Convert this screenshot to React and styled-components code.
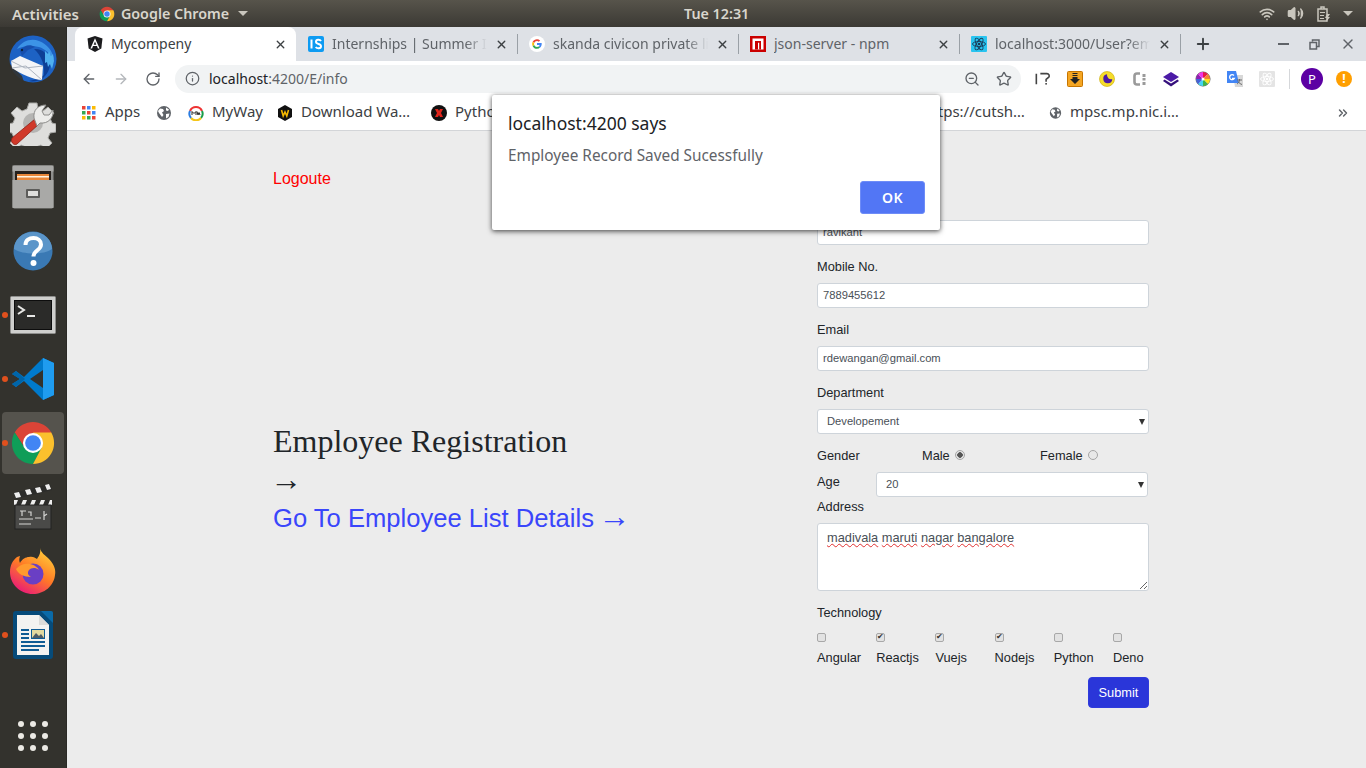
import styled, { createGlobalStyle } from 'styled-components';
import { ArrowLeft, ArrowRight, RotateCw, Info, ZoomOut, Star, X, Plus, Wifi, Volume2, ChevronsRight } from 'lucide-react';

const GlobalStyle = createGlobalStyle`
  html, body {
    margin: 0;
    height: 100%;
    overflow: hidden;
    background: #33322d;
  }
  * {
    box-sizing: border-box;
  }
`;

const Screen = styled.div`
  display: flex;
  flex-direction: column;
  width: 1366px;
  height: 768px;
  overflow: hidden;
  font-family: 'Noto Sans', sans-serif;
`;

const TopBar = styled.header`
  display: grid;
  grid-template-columns: 684px 1fr auto;
  align-items: center;
  height: 27px;
  flex-shrink: 0;
  background: linear-gradient(#57544b, #3b3934);
  color: #d9d6cd;
  font-size: 14.300px;
  font-weight: 600;
`;
const TopLeft = styled.div`
  display: flex;
  align-items: center;
  padding-left: 12px;
`;
const Activities = styled.span`
  font-size: 15px;
`;
const AppName = styled.span`
  display: flex;
  align-items: center;
  gap: 6px;
  margin-left: 20px;
`;
const Caret = styled.span`
  width: 0;
  height: 0;
  border-left: 5px solid transparent;
  border-right: 5px solid transparent;
  border-top: 5px solid #c9c6bd;
  margin-left: ${(p) => p.$gap || 0}px;
`;
const TopRight = styled.div`
  display: flex;
  align-items: center;
  gap: 12px;
  padding-right: 13px;
  color: #c9c6bd;
`;

const Desktop = styled.div`
  display: flex;
  flex: 1;
  min-height: 0;
`;

const Dock = styled.nav`
  display: flex;
  flex-direction: column;
  width: 67px;
  flex-shrink: 0;
  background: #33322d;
  border-right: 1px solid #2b2a26;
`;
const DockItem = styled.div`
  position: relative;
  display: flex;
  align-items: center;
  justify-content: center;
  width: 66px;
  height: 64px;
  flex-shrink: 0;
  margin-top: ${(p) => (p.$bottom ? 'auto' : '0')};

  ${(p) =>
    p.$running &&
    `
    &:before {
      content: '';
      position: absolute;
      left: 2px;
      top: 29px;
      width: 6px;
      height: 6px;
      border-radius: 50%;
      background: #e0501d;
    }
  `}
`;
const DockTile = styled.div`
  display: flex;
  align-items: center;
  justify-content: center;
  width: 62px;
  height: 62px;
  border-radius: 4px;
  background: #55534d;
`;
const DotGrid = styled.div`
  display: grid;
  grid-template-columns: repeat(3, 6px);
  gap: 6px;

  & span {
    width: 6px;
    height: 6px;
    border-radius: 50%;
    background: #ebe9e4;
  }
`;

const Browser = styled.main`
  display: flex;
  flex-direction: column;
  position: relative;
  flex: 1;
  min-width: 0;
  background: #ececec;
`;

const TabStrip = styled.div`
  display: flex;
  align-items: flex-end;
  height: 34px;
  flex-shrink: 0;
  padding-left: 8px;
  background: #dee1e6;
`;
const Tab = styled.div`
  display: flex;
  align-items: center;
  gap: 8px;
  width: 221px;
  height: 34px;
  padding: 0 9px 0 12px;
  flex-shrink: 0;
  background: ${(p) => (p.$active ? '#fff' : 'transparent')};
  border-radius: ${(p) => (p.$active ? '8px 8px 0 0' : '0')};
  color: ${(p) => (p.$active ? '#3c4043' : '#5f6368')};
  font-size: 14px;
  position: relative;

  ${(p) =>
    p.$divider &&
    `
    &:after {
      content: '';
      position: absolute;
      right: -1px;
      top: 7px;
      width: 1px;
      height: 20px;
      background: #9aa0a6;
    }
  `}
`;
const TabTitle = styled.span`
  flex: 1;
  min-width: 0;
  overflow: hidden;
  white-space: nowrap;
  padding-bottom: 2px;
  ${(p) =>
    p.$fade &&
    `
    -webkit-mask-image: linear-gradient(90deg, #000 86%, transparent 100%);
    mask-image: linear-gradient(90deg, #000 86%, transparent 100%);
  `}
`;
const NewTab = styled.div`
  display: flex;
  align-items: center;
  justify-content: center;
  width: 44px;
  height: 34px;
  margin-left: 1px;
  color: #3c4043;
`;
const WindowControls = styled.div`
  display: flex;
  align-items: center;
  margin-left: auto;
  height: 34px;
  padding-right: 10px;
  gap: 15px;
  color: #5f6368;
`;
const WindowButton = styled.div`
  display: flex;
  align-items: center;
  justify-content: center;
  width: 16px;
  height: 16px;
  margin-left: ${(p) => p.$gap || 0}px;
`;

const Toolbar = styled.div`
  display: flex;
  align-items: center;
  height: 35px;
  flex-shrink: 0;
  padding-left: 14px;
  background: #fff;
  color: #5f6368;
`;
const NavButton = styled.div`
  display: flex;
  align-items: center;
  justify-content: center;
  width: 16px;
  margin-right: ${(p) => (p.$last ? 14 : 16)}px;
  color: ${(p) => (p.$off ? '#b4b7bb' : '#5f6368')};
`;
const Omnibox = styled.div`
  display: flex;
  align-items: center;
  gap: 16px;
  width: 846px;
  height: 28px;
  padding: 0 9px 0 10px;
  flex-shrink: 0;
  border-radius: 14px;
  background: #f1f3f4;
`;
const Url = styled.span`
  flex: 1;
  margin-left: -7px;
  font-size: 14px;
  color: #5f6368;

  & b {
    font-weight: 400;
    color: #202124;
  }
`;
const Extensions = styled.div`
  display: flex;
  align-items: center;
  margin-left: 14px;
`;
const Extension = styled.div`
  display: flex;
  align-items: center;
  justify-content: center;
  width: 16px;
  height: 16px;
  margin-right: 16px;
`;
const ToolbarDivider = styled.div`
  width: 1px;
  height: 20px;
  background: #d5d7da;
  margin: 0 11px 0 -2px;
`;
const Avatar = styled.div`
  display: flex;
  align-items: center;
  justify-content: center;
  width: 22px;
  height: 22px;
  border-radius: 50%;
  background: #5c00a3;
  color: #fff;
  font-size: 13px;
`;
const Warning = styled.div`
  display: flex;
  align-items: center;
  justify-content: center;
  width: 16px;
  height: 16px;
  margin-left: 13px;
  border-radius: 50%;
  background: #ff9f00;
  color: #fff;
  font-size: 12px;
  font-weight: 700;
`;

const BookmarksBar = styled.div`
  display: flex;
  align-items: center;
  height: 35px;
  flex-shrink: 0;
  padding: 0 0 1px 15px;
  background: #fff;
  border-bottom: 1px solid #d3d5d8;
  color: #5f6368;
`;
const Bookmark = styled.div`
  display: flex;
  align-items: center;
  justify-content: ${(p) => (p.$end ? 'flex-end' : 'flex-start')};
  gap: ${(p) => p.$gap || 8}px;
  width: ${(p) => p.$w}px;
  padding-right: ${(p) => (p.$end ? 24 : 0)}px;
  flex-shrink: 0;
  font-size: 15px;
  color: #3c4043;
  white-space: nowrap;

  & span {
    padding-bottom: 3px;
  }
`;
const MoreBookmarks = styled.div`
  display: flex;
  margin-left: auto;
  margin-right: 16px;
  color: #5f6368;
`;

const Page = styled.section`
  display: grid;
  grid-template-columns: 544px 332px;
  flex: 1;
  min-height: 0;
  padding: 0 0 0 206px;
  font-family: 'Liberation Sans', Arial, sans-serif;
`;
const Intro = styled.div`
  display: flex;
  flex-direction: column;
  align-items: flex-start;
`;
const Logout = styled.a`
  margin-top: 39px;
  font-size: 16px;
  line-height: 18px;
  color: #ff0000;
`;
const IntroTitle = styled.h1`
  margin: 234px 0 0;
  font-family: 'Liberation Serif', 'Times New Roman', serif;
  font-size: 32px;
  font-weight: 400;
  line-height: 38px;
  color: #212529;
`;
const LongArrow = styled.div`
  margin: 0 0 0 -3px;
  font-family: 'Liberation Serif', 'Times New Roman', serif;
  font-size: 32px;
  line-height: 38px;
  color: #212529;
`;
const ListLink = styled.a`
  margin-top: 4px;
  font-size: 25.600px;
  line-height: 32px;
  color: #3a46fb;
`;
const LinkArrow = styled.span`
  margin-left: -3px;
  font-family: 'Liberation Serif', 'Times New Roman', serif;
  font-size: 32px;
  line-height: 0;
`;

const Form = styled.form`
  display: flex;
  flex-direction: column;
  padding-top: 64px;
  color: #212529;
  font-size: 12.800px;
`;
const Label = styled.label`
  display: block;
  line-height: 15px;
  padding-top: ${(p) => (p.$raised ? 0 : 1)}px;
  height: 15px;
  margin-bottom: ${(p) => (p.$gap === undefined ? 10 : p.$gap)}px;
`;
const Field = styled.div`
  margin-bottom: 13px;
`;
const inputBox = `
  display: block;
  width: 100%;
  height: 25px;
  background: #fff;
  border: 1px solid #ced4da;
  border-radius: 3px;
  color: #495057;
  font-family: 'Liberation Sans', Arial, sans-serif;
  font-size: 11.200px;
  outline: none;
`;
const TextInput = styled.input`
  ${inputBox}
  padding: 0 6px 2px 5px;
`;
const SelectWrap = styled.div`
  position: relative;
  width: 100%;

  &:after {
    content: '';
    position: absolute;
    right: 4px;
    top: 10px;
    border-left: 3px solid transparent;
    border-right: 3px solid transparent;
    border-top: 6px solid #333;
  }
`;
const Select = styled.select`
  ${inputBox}
  appearance: none;
  padding: 0 9px 1px;
`;
const GenderRow = styled.div`
  display: grid;
  grid-template-columns: 105px 118px 1fr;
  line-height: 15px;
  padding-top: 1px;
  height: 15px;
  margin-bottom: 10px;
`;
const GenderOption = styled.label`
  display: flex;
  align-items: center;
  gap: 5px;
`;
const Radio = styled.input.attrs({ type: 'radio' })`
  appearance: none;
  width: 10px;
  height: 10px;
  margin: 0 0 2px;
  border: 1px solid #a5a5a5;
  border-radius: 50%;
  background: ${(p) => (p.checked ? 'radial-gradient(circle, #555 0 2.5px, #e4e4e4 3px)' : '#e8e8e8')};
`;
const AgeRow = styled.div`
  display: grid;
  grid-template-columns: 59px 272px;
  margin-bottom: 2px;
`;
const AgeLabel = styled.label`
  line-height: 15px;
  margin-top: 2px;
`;
const AddressBox = styled.div`
  width: 100%;
  height: 68px;
  padding: 6px 9px;
  background: #fff;
  border: 1px solid #ced4da;
  border-radius: 3px;
  color: #495057;
  font-size: 12.800px;
  line-height: 15px;
  overflow: auto;
  resize: both;
  margin-bottom: 14px;
`;
const Misspelled = styled.span`
  text-decoration: underline wavy #e03030 1px;
  text-underline-offset: 1px;
`;
const TechGrid = styled.div`
  display: grid;
  grid-template-columns: repeat(6, 59.2px);
`;
const TechOption = styled.label`
  display: flex;
  flex-direction: column;
  align-items: flex-start;
  gap: 8px;
  line-height: 15px;
  white-space: nowrap;
`;
const CheckBox = styled.input.attrs({ type: 'checkbox' })`
  appearance: none;
  position: relative;
  width: 9px;
  height: 9px;
  margin: 0;
  border: 1px solid #a8a8a8;
  border-radius: 2px;
  background: #e2e2e2;

  &:checked:after {
    content: '✔';
    position: absolute;
    left: 0;
    top: -3px;
    font-size: 8px;
    line-height: 12px;
    color: #333;
  }
`;
const Actions = styled.div`
  display: flex;
  justify-content: flex-end;
  margin-top: 12px;
`;
const SubmitButton = styled.button`
  width: 61px;
  height: 31px;
  padding: 0;
  border: 1px solid #2f3bdc;
  border-radius: 4px;
  background: #2a36d9;
  color: #fff;
  font-family: 'Liberation Sans', Arial, sans-serif;
  font-size: 12.800px;
`;

const Dialog = styled.div`
  position: absolute;
  left: 425px;
  top: 68px;
  width: 448px;
  height: 135px;
  padding: 16px 15px 16px 16px;
  background: #fff;
  border-radius: 2px;
  box-shadow: 0 1px 4px rgba(0, 0, 0, 0.55), 0 2px 6px rgba(0, 0, 0, 0.25);
`;
const DialogTitle = styled.div`
  font-size: 17.500px;
  line-height: 24px;
  color: #202124;
`;
const DialogMessage = styled.div`
  margin-top: 8px;
  font-size: 15.350px;
  line-height: 24px;
  color: #5f6368;
`;
const DialogActions = styled.div`
  display: flex;
  justify-content: flex-end;
  margin-top: 14px;
`;
const OkButton = styled.button`
  width: 65px;
  height: 33px;
  border: 1px solid #6e8cf7;
  border-radius: 3px;
  background: #5276f5;
  color: #fff;
  font-family: 'Noto Sans', sans-serif;
  font-size: 14px;
  font-weight: 600;
  letter-spacing: 0.5px;
`;

const ChromeLogo = ({ size }) => (
  <svg width={size} height={size} viewBox="0 0 48 48">
    <path fill="#db4437" d="M43.05 13A22 22 0 0 0 4.95 13L15.3 29 24 14h19.05z" />
    <path fill="#0f9d58" d="M4.95 13A22 22 0 0 0 24 46l9-17H15.3z" />
    <path fill="#fbc02d" d="M24 46A22 22 0 0 0 43.05 13H24l9 16z" />
    <circle cx="24" cy="24" r="10.5" fill="#fff" />
    <circle cx="24" cy="24" r="8.2" fill="#4285f4" />
  </svg>
);

const ThunderbirdIcon = () => (
  <svg width="48" height="48" viewBox="0 0 48 48">
    <circle cx="24" cy="24" r="23.500" fill="#1d62c4" />
    <path fill="#3c93e6" d="M8 14C13 6 22 3 30 6c8 3 14 10 15 19-4-7-9-11-15-13-8-2-16-1-22 2z" />
    <path fill="#0d3f96" d="M25 14c8-1 14 5 16 12 1 7-3 14-8 18-4 2-9 3-13 2 6-1 12-3 15-6 1-9-2-19-10-26z" />
    <path fill="#4fb0f0" d="M36 16l3 3 1-3 2 5 2-2 1 7-2 8-2-5-2 3-1-5-2 1z" />
    <path fill="#164fae" d="M11 16C15 10 21 9 26 12l-7 3-6 6z" />
    <path fill="#33322d" d="M0 28l3 10 6 6 6 3-2-6-6-6z" opacity="0.9" />
    <path fill="#f4f5f7" d="M2 26l9-5 23 10-1 14c-8 0-21-6-30-12z" />
    <path fill="none" stroke="#aeb5c0" strokeWidth="1" d="M3 33l14-2 16 14M2 26l14 7 18-2" />
    <circle cx="13" cy="15" r="1.200" fill="#10243f" />
  </svg>
);

const GearIcon = () => (
  <svg width="46" height="46" viewBox="0 0 46 46">
    <path
      fill="#dededc"
      stroke="#a9a9a6"
      strokeWidth="1"
      d="M19 3h8l1 6 5 2 5-4 6 6-4 5 2 5 4 1v8l-6 1-2 5 4 5-6 6-5-4-5 2-1 4h-8l-1-4-5-2-5 4-6-6 4-5-2-5-5-1v-8l6-1 2-5-4-5 6-6 5 4 5-2z"
    />
    <circle cx="23" cy="23" r="10" fill="#b5b5b3" />
    <path fill="#d0392a" stroke="#8e1f16" strokeWidth="0.8" d="M2 38l23-19 4 5L7 44c-3 2-7-2-5-6z" />
    <path fill="#ececea" stroke="#8c8c8a" strokeWidth="1" d="M24 18c-1-8 4-13 12-13l-4 6 2 4 5 0 4-5c1 8-5 14-13 13l-3 3z" />
  </svg>
);

const CabinetIcon = () => (
  <svg width="42" height="44" viewBox="0 0 42 44">
    <rect x="0.5" y="0.5" width="41" height="43" rx="2" fill="#8f8f8d" />
    <rect x="0.5" y="0.5" width="41" height="6" fill="#a9a9a7" />
    <rect x="3" y="6" width="36" height="10" fill="#26211d" />
    <rect x="5" y="9" width="32" height="6" fill="#e8873a" />
    <rect x="5" y="11" width="32" height="1.5" fill="#fff3e0" />
    <rect x="0.5" y="15" width="41" height="28" fill="#a9a9a7" />
    <rect x="14" y="24" width="14" height="9" rx="1" fill="#5c5c5a" />
    <rect x="16" y="26" width="10" height="5" fill="#dfdfdd" />
  </svg>
);

const HelpIcon = () => (
  <svg width="40" height="40" viewBox="0 0 40 40">
    <circle cx="20" cy="20" r="19.5" fill="#3a79b4" />
    <path fill="#5b95c9" d="M1 18a19 17 0 0 1 38 0c-8 6-29 6-38 0z" />
    <path fill="none" stroke="#fff" strokeWidth="4" d="M12.5 14c0-5 4-7 8-7s7.5 2.5 7.5 6.5c0 6-7.5 5.5-7.500 12" />
    <circle cx="20.5" cy="32" r="3" fill="#fff" />
  </svg>
);

const TerminalIcon = () => (
  <svg width="46" height="38" viewBox="0 0 46 38">
    <rect x="0.5" y="0.5" width="45" height="37" rx="1" fill="#cfcfcd" stroke="#8f8f8d" />
    <rect x="4.500" y="4.500" width="37" height="29" fill="#2b2b29" stroke="#0d0d0d" />
    <path fill="none" stroke="#e8e8e6" strokeWidth="2" d="M8 10l6 4-6 4" />
    <rect x="17" y="19" width="8" height="2" fill="#e8e8e6" />
  </svg>
);

const VsCodeIcon = () => (
  <svg width="42" height="42" viewBox="0 0 42 42">
    <path fill="#007acc" d="M31 0L12 19 4 13 0 16l8 5-8 5 4 3 8-6 19 19 11-5V5z" />
    <path fill="#0065a9" d="M4 13L0 16l8 5-8 5 4 3 9-8z" />
    <path fill="#1f9cf0" d="M31 0l11 5v32l-11 5z" />
    <path fill="#33322d" d="M31 12L18 21l13 9z" />
  </svg>
);

const ClapperIcon = () => (
  <svg width="40" height="46" viewBox="0 0 40 46">
    <path fill="#2c2c2a" d="M1 9L37 0l2 6L3 15z" />
    <path fill="#eee" d="M1 9l5-1 2 5-5 1zM12 6l5-1 2 5-5 1zM22 4l5-1 2 5-5 1zM32 1l4-1 2 5-4 1z" />
    <rect x="1" y="16" width="38" height="5" fill="#eee" />
    <path fill="#2c2c2a" d="M5 16h5l-2 5H3zM14 16h5l-2 5h-5zM23 16h5l-2 5h-5zM32 16h5l-2 5h-5z" />
    <rect x="2" y="21" width="36" height="24" fill="#4a4a48" stroke="#222" />
    <path fill="none" stroke="#d5d5d3" strokeWidth="1.200" d="M7 27h6M9 27v5M15 28h3v4M22 34h6M31 27v9M31 32l3-2M6 35h14M6 40h12" />
  </svg>
);

const FirefoxIcon = () => (
  <svg width="46" height="46" viewBox="0 0 46 46">
    <defs>
      <linearGradient id="foxBody" x1="0.8" y1="0" x2="0.2" y2="1">
        <stop offset="0" stopColor="#ffd23a" />
        <stop offset="0.5" stopColor="#ff7a26" />
        <stop offset="1" stopColor="#e8127f" />
      </linearGradient>
    </defs>
    <path
      fill="url(#foxBody)"
      d="M30 0c1 5 5 7 9 11 5 5 7 11 6 16-1 11-11 19-22 19C10 46 0 36 0 24 0 17 3 12 7 9l3-1c-1 3-1 5 0 7 2-4 6-6 9-6 4-1 6 1 8 2 2-3 4-6 3-11z"
    />
    <circle cx="23" cy="26" r="10.5" fill="#6a3fc4" />
    <path fill="#ff9a2e" d="M6 21c4-5 10-6 14-5 5 1 8 4 9 6-4-3-8-2-10 0-2 3-1 5 2 7-7 0-13-3-15-8z" />
  </svg>
);

const WriterIcon = () => (
  <svg width="40" height="48" viewBox="0 0 40 48">
    <rect x="0" y="0" width="40" height="48" rx="3" fill="#064b7a" />
    <path fill="#0a6aa8" d="M28 0h10a2 2 0 0 1 2 2v10z" />
    <path fill="#f3f3f1" d="M4 4h22l10 10v30H4z" />
    <path fill="#dcdcda" d="M26 4v10h10z" />
    <path fill="#0f5c94" d="M8 18h8v2H8zM8 22h8v2H8zM8 26h8v2H8zM8 30h24v2H8zM8 34h24v2H8zM8 38h18v2H8z" />
    <rect x="18" y="18" width="14" height="10" fill="#0f5c94" />
    <rect x="19" y="19" width="12" height="8" fill="#e3d9a0" />
    <path fill="#4d5a66" d="M19 27l4-5 3 3 2-2 3 4z" />
  </svg>
);

const AngularFav = () => (
  <svg width="16" height="16" viewBox="0 0 16 16">
    <path fill="#1b1b1d" d="M8 0l7.5 2.6-1.2 9.9L8 16l-6.3-3.5L.5 2.6z" />
    <path fill="#fff" d="M8 2.2L3.4 12.4h1.7l.9-2.3h4l.9 2.3h1.7zM6.7 8.7L8 5.6l1.3 3.1z" />
  </svg>
);
const InternshalaFav = () => (
  <svg width="16" height="16" viewBox="0 0 16 16">
    <rect width="16" height="16" rx="2" fill="#0d9bf2" />
    <path fill="none" stroke="#fff" strokeWidth="2" d="M3.5 3.5v9M13 5c-1-1.6-5-1.8-5 .8 0 2.9 5 1.5 5 4.4 0 2.6-4 2.5-5.3.8" />
  </svg>
);
const GoogleFav = () => (
  <svg width="16" height="16" viewBox="0 0 16 16">
    <circle cx="8" cy="8" r="8" fill="#fff" />
    <path fill="#ea4335" d="M8 3.2c1.2 0 2.3.4 3.1 1.2l-1.3 1.3C9.300 5.200 8.700 5 8 5 6.700 5 5.600 5.800 5.200 7L3.700 5.800C4.500 4.200 6.100 3.200 8 3.200z" />
    <path fill="#fbbc05" d="M3.700 5.800L5.200 7c-.2.600-.2 1.400 0 2l-1.500 1.200c-.7-1.400-.7-3 0-4.400z" />
    <path fill="#34a853" d="M5.200 9c.4 1.200 1.500 2 2.800 2 .7 0 1.200-.2 1.700-.5l1.400 1.100c-.8.800-1.900 1.200-3.100 1.200-1.900 0-3.500-1-4.300-2.600z" />
    <path fill="#4285f4" d="M12.700 8c0-.3 0-.6-.1-.9H8v1.800h2.600c-.1.600-.5 1.200-.9 1.600l1.400 1.100c.9-.8 1.600-2.100 1.600-3.600z" />
  </svg>
);
const NpmFav = () => (
  <svg width="16" height="16" viewBox="0 0 16 16">
    <rect width="16" height="16" fill="#cb0000" />
    <rect x="2.500" y="2.500" width="11" height="11" fill="#fff" />
    <path fill="#cb0000" d="M5 5h6v8.500H9.200V6.800H8V13.500H5z" />
  </svg>
);
const Atom = ({ size, color, bg }) => (
  <svg width={size} height={size} viewBox="0 0 16 16">
    <rect width="16" height="16" rx="1" fill={bg} />
    <g fill="none" stroke={color} strokeWidth="0.9">
      <ellipse cx="8" cy="8" rx="6.500" ry="2.500" />
      <ellipse cx="8" cy="8" rx="6.500" ry="2.500" transform="rotate(60 8 8)" />
      <ellipse cx="8" cy="8" rx="6.500" ry="2.500" transform="rotate(120 8 8)" />
    </g>
    <circle cx="8" cy="8" r="1.300" fill={color} />
  </svg>
);

const GlobeFav = () => (
  <svg width="16" height="16" viewBox="0 0 16 16">
    <circle cx="8" cy="8" r="7" fill="#5f6368" />
    <path fill="#fff" d="M4 3.500l3 .5 1 2-2 1.500L7.500 10 6 12 3 8 2 6zM10 2.500l3 2-1 1.500-2-.5zM10 9l3.500-.5-1 3.500-2.500 1.500z" />
  </svg>
);
const AppsIcon = () => {
  const colors = ['#ea4335', '#4285f4', '#fbbc05', '#34a853', '#ea4335', '#4285f4', '#fbbc05', '#34a853', '#ea4335'];
  return (
    <svg width="14" height="14" viewBox="0 0 14 14">
      {colors.map((c, i) => (
        <rect key={i} x={(i % 3) * 5} y={Math.floor(i / 3) * 5} width="3.500" height="3.500" fill={c} />
      ))}
    </svg>
  );
};
const MyWayFav = () => (
  <svg width="16" height="16" viewBox="0 0 16 16">
    <path fill="none" stroke="#e33" strokeWidth="2" d="M2 6a6.500 6.500 0 0 1 12 0" />
    <path fill="none" stroke="#1a9e4b" strokeWidth="2" d="M14 6a6.500 6.500 0 0 1 -1 7" />
    <path fill="none" stroke="#f5c518" strokeWidth="2" d="M13 13a6.500 6.500 0 0 1 -10 0" />
    <path fill="none" stroke="#2a7de1" strokeWidth="2" d="M3 13a6.500 6.500 0 0 1 -1 -7" />
    <path fill="none" stroke="#222" strokeWidth="1" d="M4 10V6.500l2 2 2-2V10M9 6.500l1 3.500 1-2.500 1 2.500" />
  </svg>
);
const WFav = () => (
  <svg width="16" height="16" viewBox="0 0 16 16">
    <path fill="#111" d="M8 0l7 4v8l-7 4-7-4V4z" />
    <path fill="none" stroke="#f5b800" strokeWidth="1.600" d="M4.500 5l1.700 6L8 7l1.800 4 1.700-6" />
  </svg>
);
const PythonFav = () => (
  <svg width="16" height="16" viewBox="0 0 16 16">
    <circle cx="8" cy="8" r="8" fill="#111" />
    <path fill="#e0241b" d="M4 4h3l1 2 1-2h3l-2 4 2 4H9L8 10l-1 2H4l2-4z" />
  </svg>
);

const PageIcons = {
  ip: (
    <svg width="18" height="16" viewBox="0 0 18 16">
      <path fill="none" stroke="#444" strokeWidth="1.800" d="M1.500 2v12M6 2h7.500a2.500 2.500 0 0 1 2 4l-3 2.500V11" />
      <rect x="11.600" y="12.500" width="1.800" height="1.800" fill="#444" />
    </svg>
  ),
  download: (
    <svg width="16" height="16" viewBox="0 0 16 16">
      <rect x="0.500" y="0.500" width="15" height="15" rx="1" fill="#f5a623" stroke="#c67500" />
      <path fill="#222" d="M5.500 2h5v1h-5zM5.500 4h5v1h-5zM5.500 6h5v2h2.500L8 13 3 8h2.500z" />
    </svg>
  ),
  moon: (
    <svg width="16" height="16" viewBox="0 0 16 16">
      <circle cx="8" cy="8" r="7.500" fill="#f5dc2a" stroke="#c7a800" strokeWidth="0.600" />
      <path fill="#4b1aa6" d="M10 3.800a4.500 4.500 0 1 0 2.800 6.400A4 4 0 0 1 10 3.800z" transform="rotate(-25 8 8)" />
    </svg>
  ),
  coin: (
    <svg width="16" height="16" viewBox="0 0 16 16">
      <path fill="none" stroke="#9a9a9a" strokeWidth="2.600" d="M9 2.500H6a2.500 2.500 0 0 0-2.500 2.500v6A2.500 2.500 0 0 0 6 13.500h3" />
      <path fill="#9a9a9a" d="M11.500 3h3v3h-3zM11.500 7h3v2.500h-3zM11.500 11h3v3h-3z" />
    </svg>
  ),
  layers: (
    <svg width="16" height="16" viewBox="0 0 16 16">
      <path fill="#4b1aa6" d="M8 1l8 5-8 5-8-5z" />
      <path fill="#35107c" d="M1.500 8.500L8 12.600l6.500-4.100L16 10l-8 5.500L0 10z" />
    </svg>
  ),
  wheel: (
    <svg width="16" height="16" viewBox="0 0 16 16">
      <circle cx="8" cy="8" r="7" fill="none" stroke="#333" strokeWidth="0.800" />
      {['#e6194b', '#f58231', '#ffe119', '#3cb44b', '#42d4f4', '#4363d8', '#911eb4', '#f032e6'].map((c, i) => (
        <path key={c} fill={c} d="M8 8L8 1A7 7 0 0 1 12.950 3.050z" transform={`rotate(${i * 45} 8 8)`} />
      ))}
      <circle cx="8" cy="8" r="1.500" fill="#fff" />
    </svg>
  ),
  translate: (
    <svg width="16" height="16" viewBox="0 0 16 16">
      <path fill="#d8d8d8" d="M6 4h10v12H8z" />
      <path fill="#4285f4" d="M0 0h9l3 12H0z" />
      <path fill="none" stroke="#fff" strokeWidth="1.300" d="M7 4.500a2.500 2.500 0 1 0 .3 3H5" />
      <path fill="none" stroke="#6b6b6b" strokeWidth="1" d="M10 9h5M12.500 8v1c0 2-1.500 3.500-2.500 4M11 10.500c1 1.500 2.500 2.500 4 3" />
    </svg>
  ),
};

const tabs = [
  { title: 'Mycompeny', icon: <AngularFav />, active: true },
  { title: 'Internships | Summer Internship', icon: <InternshalaFav />, divider: true, fade: true },
  { title: 'skanda civicon private limited', icon: <GoogleFav />, divider: true, fade: true },
  { title: 'json-server - npm', icon: <NpmFav />, divider: true },
  { title: 'localhost:3000/User?email=ravi', icon: <Atom size={16} color="#1b3a57" bg="#29c4f0" />, divider: true, fade: true },
];

const technologies = [
  { name: 'Angular', checked: false },
  { name: 'Reactjs', checked: true },
  { name: 'Vuejs', checked: true },
  { name: 'Nodejs', checked: true },
  { name: 'Python', checked: false },
  { name: 'Deno', checked: false },
];

const App = () => {
  return (
    <Screen>
      <GlobalStyle />
      <TopBar>
        <TopLeft>
          <Activities>Activities</Activities>
          <AppName>
            <ChromeLogo size={16} />
            Google Chrome
            <Caret $gap={3} />
          </AppName>
        </TopLeft>
        <span>Tue 12:31</span>
        <TopRight>
          <Wifi size={16} strokeWidth={2.5} />
          <Volume2 size={17} fill="currentColor" />
          <svg width="15" height="16" viewBox="0 0 15 16">
            <path fill="none" stroke="currentColor" strokeWidth="1.500" d="M2 3h9v12H2zM5 3V1h3v2" />
            <path fill="currentColor" d="M4 6h5v1H4zM4 9h4v1H4zM4 12h4v1H4zM11 8h3l-2 3h2l-4 5 1-4H9z" />
          </svg>
          <Caret />
        </TopRight>
      </TopBar>

      <Desktop>
        <Dock>
          <DockItem><ThunderbirdIcon /></DockItem>
          <DockItem><GearIcon /></DockItem>
          <DockItem><CabinetIcon /></DockItem>
          <DockItem><HelpIcon /></DockItem>
          <DockItem $running><TerminalIcon /></DockItem>
          <DockItem $running><VsCodeIcon /></DockItem>
          <DockItem $running>
            <DockTile><ChromeLogo size={46} /></DockTile>
          </DockItem>
          <DockItem><ClapperIcon /></DockItem>
          <DockItem><FirefoxIcon /></DockItem>
          <DockItem $running><WriterIcon /></DockItem>
          <DockItem $bottom>
            <DotGrid>
              {Array.from({ length: 9 }, (_, i) => (
                <span key={i} />
              ))}
            </DotGrid>
          </DockItem>
        </Dock>

        <Browser>
          <TabStrip>
            {tabs.map((tab) => (
              <Tab key={tab.title} $active={tab.active} $divider={tab.divider}>
                {tab.icon}
                <TabTitle $fade={tab.fade}>{tab.title}</TabTitle>
                <X size={13} strokeWidth={2.5} color="#3c4043" />
              </Tab>
            ))}
            <NewTab><Plus size={18} strokeWidth={2.5} /></NewTab>
            <WindowControls>
              <WindowButton>
                <svg width="11" height="2" viewBox="0 0 11 2"><rect width="11" height="2" fill="#5f6368" /></svg>
              </WindowButton>
              <WindowButton>
                <svg width="11" height="11" viewBox="0 0 11 11">
                  <path fill="none" stroke="#5f6368" strokeWidth="1.500" d="M3.500 2.500V1h6.500v6.500H8M1 3.500h6.500V10H1z" />
                </svg>
              </WindowButton>
              <WindowButton $gap={3}><X size={16} strokeWidth={2} /></WindowButton>
            </WindowControls>
          </TabStrip>

          <Toolbar>
            <NavButton><ArrowLeft size={18} strokeWidth={2} /></NavButton>
            <NavButton $off><ArrowRight size={18} strokeWidth={2} /></NavButton>
            <NavButton $last><RotateCw size={16} strokeWidth={2} /></NavButton>
            <Omnibox>
              <Info size={15} />
              <Url><b>localhost</b>:4200/E/info</Url>
              <ZoomOut size={16} />
              <Star size={16} />
            </Omnibox>
            <Extensions>
              <Extension>{PageIcons.ip}</Extension>
              <Extension>{PageIcons.download}</Extension>
              <Extension>{PageIcons.moon}</Extension>
              <Extension>{PageIcons.coin}</Extension>
              <Extension>{PageIcons.layers}</Extension>
              <Extension>{PageIcons.wheel}</Extension>
              <Extension>{PageIcons.translate}</Extension>
              <Extension><Atom size={16} color="#fff" bg="#e4e4e4" /></Extension>
              <ToolbarDivider />
              <Avatar>P</Avatar>
              <Warning>!</Warning>
            </Extensions>
          </Toolbar>

          <BookmarksBar>
            <Bookmark $w={74} $gap={9}><AppsIcon /><span>Apps</span></Bookmark>
            <Bookmark $w={32}><GlobeFav /></Bookmark>
            <Bookmark $w={89}><MyWayFav /><span>MyWay</span></Bookmark>
            <Bookmark $w={154}><WFav /><span>Download Wa…</span></Bookmark>
            <Bookmark $w={160}><PythonFav /><span>Python tutorial</span></Bookmark>
            <Bookmark $w={458} $end><span>https://cutsh…</span></Bookmark>
            <Bookmark $w={130}><GlobeFav /><span>mpsc.mp.nic.i…</span></Bookmark>
            <MoreBookmarks><ChevronsRight size={14} strokeWidth={2.5} /></MoreBookmarks>
          </BookmarksBar>

          <Page>
            <Intro>
              <Logout>Logoute</Logout>
              <IntroTitle>Employee Registration</IntroTitle>
              <LongArrow>→</LongArrow>
              <ListLink>Go To Employee List Details <LinkArrow>→</LinkArrow></ListLink>
            </Intro>

            <Form>
              <Field>
                <Label>Name</Label>
                <TextInput value="ravikant" readOnly />
              </Field>
              <Field>
                <Label>Mobile No.</Label>
                <TextInput value="7889455612" readOnly />
              </Field>
              <Field>
                <Label>Email</Label>
                <TextInput value="rdewangan@gmail.com" readOnly />
              </Field>
              <Field>
                <Label>Department</Label>
                <SelectWrap>
                  <Select defaultValue="Developement">
                    <option>Developement</option>
                  </Select>
                </SelectWrap>
              </Field>
              <GenderRow>
                <span>Gender</span>
                <GenderOption>Male <Radio name="gender" checked readOnly /></GenderOption>
                <GenderOption>Female <Radio name="gender" readOnly /></GenderOption>
              </GenderRow>
              <AgeRow>
                <AgeLabel>Age</AgeLabel>
                <SelectWrap>
                  <Select defaultValue="20">
                    <option>20</option>
                  </Select>
                </SelectWrap>
              </AgeRow>
              <Label $gap={9} $raised>Address</Label>
              <AddressBox>
                <Misspelled>madivala</Misspelled> <Misspelled>maruti</Misspelled> <Misspelled>nagar</Misspelled>{' '}
                <Misspelled>bangalore</Misspelled>
              </AddressBox>
              <Label $gap={13} $raised>Technology</Label>
              <TechGrid>
                {technologies.map((tech) => (
                  <TechOption key={tech.name}>
                    <CheckBox checked={tech.checked} readOnly />
                    {tech.name}
                  </TechOption>
                ))}
              </TechGrid>
              <Actions>
                <SubmitButton type="button">Submit</SubmitButton>
              </Actions>
            </Form>
          </Page>

          <Dialog>
            <DialogTitle>localhost:4200 says</DialogTitle>
            <DialogMessage>Employee Record Saved Sucessfully</DialogMessage>
            <DialogActions>
              <OkButton type="button">OK</OkButton>
            </DialogActions>
          </Dialog>
        </Browser>
      </Desktop>
    </Screen>
  );
};

export default App;
